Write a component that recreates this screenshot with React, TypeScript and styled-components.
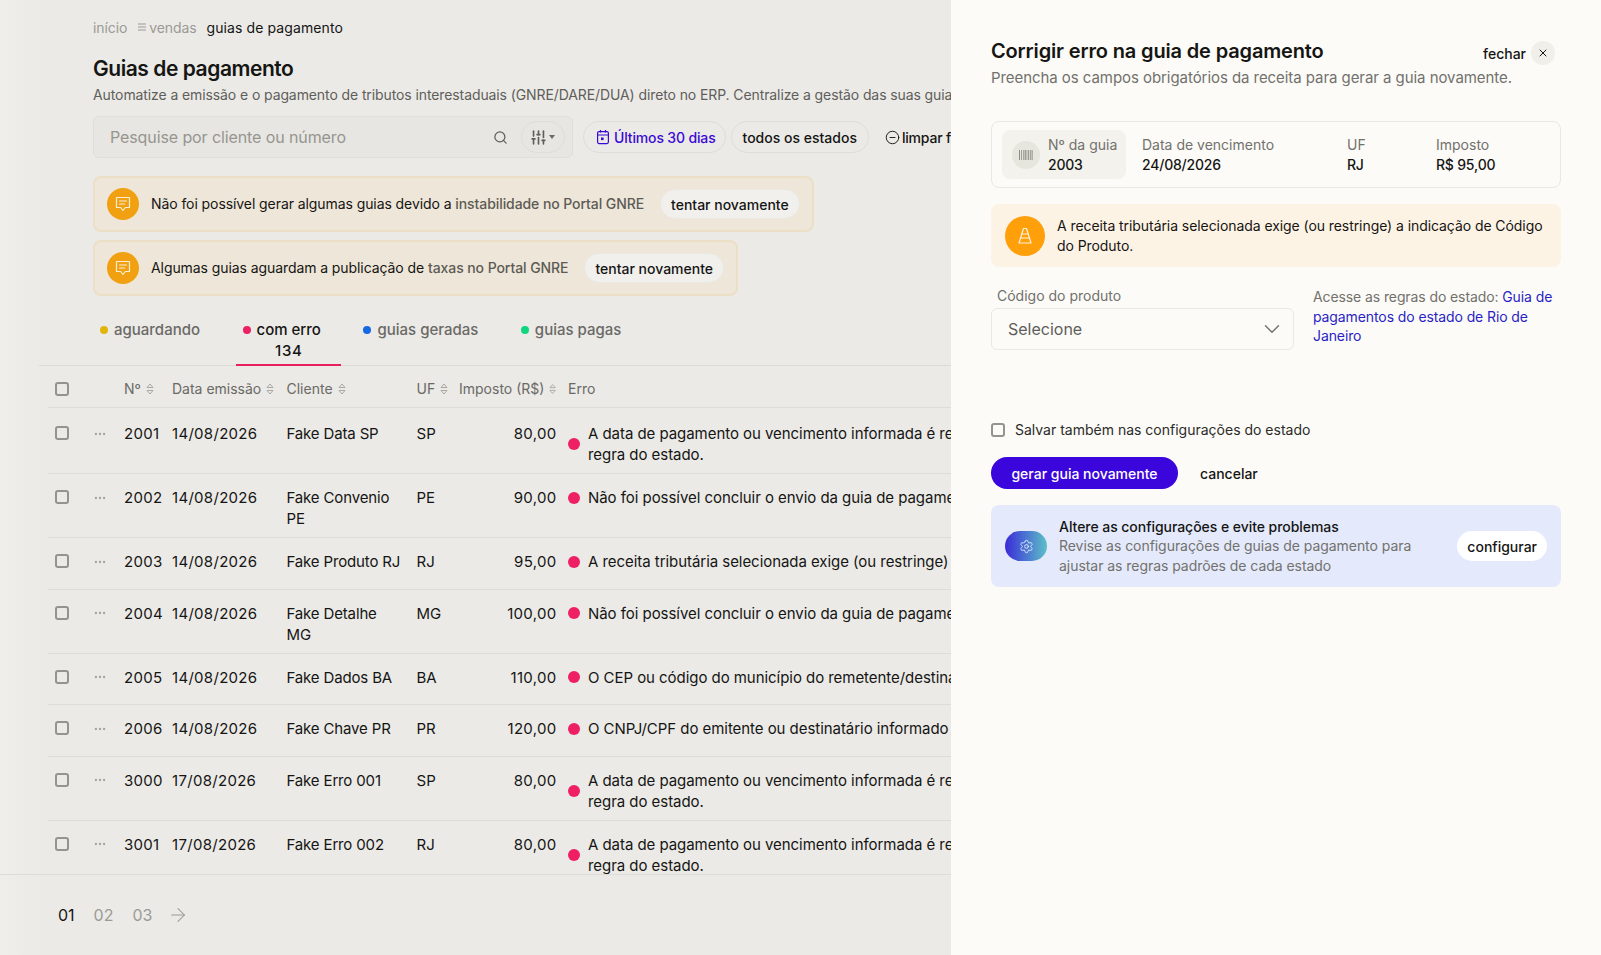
import React from 'react';
import styled, { createGlobalStyle } from 'styled-components';
import {
  ArrowRight,
  ChevronDown,
  CircleMinus,
  Ellipsis,
  Search,
  Settings,
  SlidersVertical,
  X,
} from 'lucide-react';

const GlobalStyle = createGlobalStyle`
  html, body {
    margin: 0;
    height: 100%;
    overflow: hidden;
  }
  body {
    font-family: Inter, "Liberation Sans", sans-serif;
    font-size: 14px;
    color: #151513;
    background: #ebeae7;
  }
  #root {
    height: 100%;
  }
  * {
    box-sizing: border-box;
  }
`;

const gridColumns = '38px 31px 48px 114.5px 130px 42.5px 97.5px 1fr';

const Shell = styled.div`
  display: flex;
  height: 955px;
  width: 1601px;
  overflow: hidden;
`;

const Main = styled.main`
  width: 951px;
  flex: none;
  display: flex;
  flex-direction: column;
  overflow: hidden;
  background: linear-gradient(90deg, #efeeeb 0, #ebeae7 40px);
`;

const Top = styled.section`
  padding: 17px 0 0 93px;
`;

const Crumbs = styled.nav`
  display: flex;
  align-items: center;
  height: 20px;
  white-space: nowrap;
`;

const Crumb = styled.span<{ $current?: boolean }>`
  color: ${({ $current }) => ($current ? '#151513' : '#9b9a95')};
  margin-right: ${({ $current }) => ($current ? '0' : '10px')};
  letter-spacing: ${({ $current }) => ($current ? '0.1px' : '-0.1px')};
  display: inline-flex;
  align-items: center;
  gap: 2px;
`;

const Title = styled.h1`
  margin: 18px 0 0;
  font-size: 21px;
  line-height: 28px;
  font-weight: 600;
  letter-spacing: -0.45px;
`;

const Description = styled.p`
  margin: 2px 0 0;
  line-height: 20px;
  color: #5f5e5a;
  white-space: nowrap;
  letter-spacing: -0.1px;
`;

const Toolbar = styled.div`
  display: flex;
  align-items: center;
  margin-top: 11px;
  white-space: nowrap;
`;

const SearchBox = styled.div`
  width: 480px;
  height: 42px;
  flex: none;
  display: flex;
  align-items: center;
  padding: 0 7px 0 16px;
  background: #e7e6e2;
  border: 1px solid #e0dfdb;
  border-radius: 6px;
  color: #96958f;
  font-size: 16px;
  letter-spacing: -0.1px;
`;

const Placeholder = styled.span`
  flex: 1;
`;

const SearchIcon = styled(Search)`
  color: #5f5e5a;
  margin-right: 13px;
`;

const FilterButton = styled.button`
  width: 44px;
  height: 32px;
  display: flex;
  align-items: center;
  justify-content: center;
  gap: 2px;
  padding: 0 2px 0 0;
  background: transparent;
  border: 1px solid #deddd8;
  border-radius: 16px;
  color: #5f5e5a;
`;

const Caret = styled.i`
  width: 0;
  height: 0;
  border-left: 3.5px solid transparent;
  border-right: 3.5px solid transparent;
  border-top: 4px solid #6b6a66;
`;

const Chip = styled.button<{ $accent?: boolean }>`
  height: 32px;
  flex: none;
  margin-left: ${({ $accent }) => ($accent ? '10px' : '5px')};
  padding: 0 ${({ $accent }) => ($accent ? '9px 0 12px' : '11px')};
  display: inline-flex;
  align-items: center;
  gap: 4px;
  background: transparent;
  border: 1px solid #deddd8;
  border-radius: 16px;
  font: inherit;
  font-weight: 500;
  letter-spacing: ${({ $accent }) => ($accent ? '-0.15px' : '0')};
  color: ${({ $accent }) => ($accent ? '#3a09d6' : '#151513')};
`;

const ClearFilters = styled.span`
  margin-left: 16px;
  flex: none;
  display: inline-flex;
  align-items: center;
  gap: 2px;
  font-weight: 500;
  letter-spacing: -0.2px;
`;

const Alerts = styled.div`
  margin-top: 18px;
  display: flex;
  flex-direction: column;
  align-items: flex-start;
  gap: 8px;
`;

const Alert = styled.div`
  height: 56px;
  display: flex;
  align-items: center;
  padding: 0 12px;
  background: #eee6d8;
  border: 2px solid #ebdfc6;
  border-radius: 8px;
  white-space: nowrap;
`;

const AlertIcon = styled.span`
  width: 32px;
  height: 32px;
  flex: none;
  display: flex;
  align-items: center;
  justify-content: center;
  border-radius: 50%;
  background: #f0a010;
  color: #fbeed2;
  margin-right: 12px;
`;

const AlertText = styled.span`
  letter-spacing: -0.08px;
  margin-top: -2px;
`;

const AlertMuted = styled.span`
  color: #5c5b55;
  font-weight: 500;
`;

const AlertButton = styled.button`
  height: 30px;
  margin-left: 16px;
  padding: 0 10px;
  border: 1px solid #e9e8e3;
  border-radius: 15px;
  background: #f1f0ed;
  font: inherit;
  font-weight: 500;
  color: #151513;
`;

const Tabs = styled.div`
  margin: 24px 0 0 38.5px;
  padding-left: 55px;
  display: flex;
  gap: 15.5px;
  height: 46px;
  border-bottom: 1px solid #dbdad6;
  white-space: nowrap;
`;

const Tab = styled.div<{ $active?: boolean }>`
  height: 46px;
  text-align: center;
  border-bottom: 2px solid ${({ $active }) => ($active ? '#e8205f' : 'transparent')};
  color: ${({ $active }) => ($active ? '#151513' : '#6a6965')};
  font-size: 15px;
  font-weight: 500;
  line-height: 20px;
`;

const TabLabel = styled.div`
  display: flex;
  align-items: center;
  gap: 6px;
  padding: 0 20.5px 0 6.5px;
`;

const Dot = styled.i<{ $color: string; $size?: number }>`
  flex: none;
  width: ${({ $size }) => $size ?? 8}px;
  height: ${({ $size }) => $size ?? 8}px;
  border-radius: 50%;
  background: ${({ $color }) => $color};
`;

const Count = styled.div`
  margin-top: 1px;
  color: #151513;
  letter-spacing: 0.6px;
`;

const TableArea = styled.div`
  flex: 1;
  min-height: 0;
  overflow: hidden;
  margin-left: 48px;
`;

const Row = styled.div<{ $first?: boolean }>`
  display: grid;
  grid-template-columns: ${gridColumns};
  min-height: 51.5px;
  padding: ${({ $first }) => ($first ? '15px' : '13px')} 0 8px 7px;
  border-bottom: 1px solid #dddcd8;
  font-size: 15px;
  line-height: 21px;
  white-space: nowrap;
`;

const HeadRow = styled.div`
  display: grid;
  grid-template-columns: ${gridColumns};
  height: 42px;
  padding: 4px 0 0 7px;
  align-items: center;
  border-bottom: 1px solid #dddcd8;
  color: #6a6965;
  white-space: nowrap;
`;

const HeadCell = styled.div`
  display: flex;
  align-items: center;
  gap: 5px;
`;

const ErrorHead = styled(HeadCell)`
  padding-left: 11.5px;
`;

const Box = styled.span`
  display: block;
  width: 14px;
  height: 14px;
  flex: none;
  border: 2px solid #94938e;
  border-radius: 3px;
  background: transparent;
`;

const RowBox = styled(Box)`
  margin-top: 3px;
`;

const RowMenu = styled.span`
  display: flex;
  height: 21px;
  align-items: center;
  color: #a3a29d;
`;

const Cell = styled.div`
  letter-spacing: 0.02px;
`;

const NumberCell = styled(Cell)`
  letter-spacing: 0.3px;
`;

const ClientCell = styled(Cell)`
  white-space: normal;
  padding-right: 12px;
  letter-spacing: -0.15px;
`;

const TaxCell = styled(NumberCell)`
  text-align: right;
`;

const ErrorCell = styled.div`
  display: flex;
  align-items: center;
  align-self: start;
  gap: 8px;
  padding-left: 11.5px;
  letter-spacing: -0.05px;
`;

const Footer = styled.footer`
  flex: none;
  height: 81px;
  border-top: 1px solid #dddcd8;
  display: flex;
  align-items: center;
  padding-left: 58px;
  gap: 19px;
  font-size: 16px;
`;

const PageLink = styled.span<{ $current?: boolean }>`
  color: ${({ $current }) => ($current ? '#151513' : '#9b9a95')};
`;

const PageArrow = styled(ArrowRight)`
  color: #9b9a95;
  margin-left: -4px;
`;

const Panel = styled.aside`
  width: 650px;
  flex: none;
  padding: 37px 40px 0;
  background: #fcfbf8;
`;

const PanelHead = styled.header`
  display: flex;
  justify-content: space-between;
  align-items: flex-start;
  white-space: nowrap;
`;

const PanelTitle = styled.h2`
  margin: 0;
  font-size: 20px;
  line-height: 28px;
  font-weight: 600;
  letter-spacing: -0.15px;
`;

const PanelSubtitle = styled.p`
  margin: 3px 0 0;
  font-size: 15px;
  line-height: 20px;
  color: #72716c;
  letter-spacing: -0.06px;
`;

const CloseGroup = styled.div`
  margin: 4px 6px 0 0;
  display: flex;
  align-items: center;
  gap: 5px;
  font-weight: 500;
`;

const CloseButton = styled.button`
  width: 24px;
  height: 24px;
  padding: 0;
  display: flex;
  align-items: center;
  justify-content: center;
  border: none;
  border-radius: 50%;
  background: #f0efea;
  color: #151513;
`;

const GuideCard = styled.section`
  margin-top: 33px;
  padding: 8px 10px;
  display: flex;
  align-items: center;
  border: 1px solid #e9e8e3;
  border-radius: 8px;
  white-space: nowrap;
`;

const GuideNumber = styled.div`
  height: 49px;
  width: 124px;
  flex: none;
  display: flex;
  align-items: center;
  gap: 8px;
  padding-left: 10px;
  background: #f3f2ed;
  border-radius: 8px;
  margin-right: 16px;
`;

const BarcodeBadge = styled.span`
  width: 28px;
  height: 28px;
  display: flex;
  align-items: center;
  justify-content: center;
  border-radius: 50%;
  background: #e6e5de;
  color: #8d8c86;
`;

const Field = styled.div<{ $width?: number }>`
  width: ${({ $width }) => ($width ? `${$width}px` : 'auto')};
  flex: none;
  line-height: 20px;
`;

const FieldLabel = styled.div`
  color: #72716c;
`;

const FieldValue = styled.div`
  font-weight: 500;
  letter-spacing: -0.2px;
`;

const Warning = styled.section`
  margin-top: 16px;
  height: 63px;
  display: flex;
  align-items: center;
  gap: 12px;
  padding: 0 10px 0 14px;
  background: #fdf3e5;
  border-radius: 8px;
  line-height: 20px;
  letter-spacing: -0.07px;
`;

const WarningIcon = styled.span`
  width: 40px;
  height: 40px;
  flex: none;
  display: flex;
  align-items: center;
  justify-content: center;
  border-radius: 50%;
  background: #ff9f0a;
  color: #fff3dc;
`;

const FormRow = styled.div`
  margin-top: 19px;
  display: flex;
  gap: 19px;
`;

const SelectColumn = styled.div`
  width: 303px;
  flex: none;
`;

const SelectLabel = styled.label`
  display: block;
  padding-left: 6px;
  line-height: 20px;
  color: #72716c;
`;

const SelectBox = styled.div`
  margin-top: 2px;
  height: 42px;
  display: flex;
  align-items: center;
  justify-content: space-between;
  padding: 0 8px 0 16px;
  border: 1px solid #e9e8e3;
  border-radius: 6px;
  font-size: 16px;
  color: #5f5e5a;
`;

const RulesText = styled.p`
  margin: 1px 0 0;
  line-height: 19.5px;
  color: #72716c;
  letter-spacing: -0.1px;
`;

const RulesLink = styled.a`
  color: #2a1fc4;
  text-decoration: none;
`;

const SaveRow = styled.label`
  margin-top: 70px;
  display: flex;
  align-items: center;
  gap: 10px;
  line-height: 20px;
  color: #2b2b28;
`;

const Actions = styled.div`
  margin-top: 17px;
  display: flex;
  align-items: center;
  gap: 22px;
`;

const PrimaryButton = styled.button`
  width: 187px;
  height: 32px;
  padding: 0;
  border: none;
  border-radius: 16px;
  background: #3b06dc;
  color: #fff;
  font: inherit;
  font-weight: 500;
`;

const GhostButton = styled.button`
  padding: 0;
  border: none;
  background: none;
  font: inherit;
  font-weight: 500;
  color: #151513;
`;

const Promo = styled.section`
  margin-top: 16px;
  height: 82px;
  display: flex;
  align-items: center;
  padding: 0 14px;
  gap: 12px;
  background: #e4eafc;
  border-radius: 8px;
`;

const PromoIcon = styled.span`
  width: 42px;
  height: 30px;
  flex: none;
  display: flex;
  align-items: center;
  justify-content: center;
  border-radius: 15px;
  background: linear-gradient(90deg, #3a2bd9, #5cc0c8);
  color: #e8f0ff;
`;

const PromoText = styled.div`
  flex: 1;
  line-height: 19.5px;
  color: #72716c;
  letter-spacing: -0.05px;
`;

const PromoTitle = styled.div`
  color: #151513;
  font-weight: 500;
`;

const PromoButton = styled.button`
  height: 30px;
  padding: 0 10px;
  border: none;
  border-radius: 15px;
  background: #fff;
  font: inherit;
  font-weight: 500;
  color: #151513;
`;

const SortIcon = () => (
  <svg width="8" height="12" viewBox="0 0 8 12" fill="none" stroke="#a9a8a3" strokeWidth="1">
    <path d="M4 1 7 4.5H1Z" />
    <path d="M4 11 1 7.5H7Z" />
  </svg>
);

const MenuGlyph = () => (
  <svg width="10" height="8" viewBox="0 0 10 8" stroke="#9b9a95" strokeWidth="1">
    <path d="M1 1h8M1 4h8M1 7h8" />
  </svg>
);

const BubbleIcon = () => (
  <svg width="18" height="18" viewBox="0 0 18 18" fill="none" stroke="currentColor" strokeWidth="1.2">
    <path d="M2.5 2.5h13v10h-4.2L9 15.5 6.7 12.5H2.5Z" strokeLinejoin="round" />
    <path d="M5.5 6h7M5.5 9h5" strokeLinecap="round" />
  </svg>
);

const BarcodeIcon = () => (
  <svg width="14" height="10" viewBox="0 0 14 10" fill="currentColor">
    <path d="M0 0h1v10H0zM2 0h.8v10H2zM4 0h.7v10H4zM5.6 0h1.2v10H5.6zM7.6 0h.7v10h-.7zM9.2 0h1v10h-1zM11 0h.7v10H11zM12.6 0h1v10h-1z" />
  </svg>
);

const CalendarIcon = () => (
  <svg width="14" height="16" viewBox="0 0 14 16" fill="none" stroke="currentColor" strokeWidth="1.2">
    <rect x="1.6" y="2.6" width="10.8" height="12" rx="1.5" />
    <path d="M1.6 6h10.8M4.5 1v2.5M9.5 1v2.5" />
    <rect x="5" y="8.5" width="2.6" height="2.6" fill="currentColor" stroke="none" />
  </svg>
);

const ConeIcon = () => (
  <svg width="16" height="18" viewBox="0 0 16 18" fill="none" stroke="currentColor" strokeWidth="1.2">
    <path d="M6.5 1.5h3L14 16H2Z" strokeLinejoin="round" />
    <path d="M4.8 7h6.4M3.6 11h8.8" />
  </svg>
);

type GuideRow = {
  id: string;
  date: string;
  client: string;
  uf: string;
  tax: string;
  error: string[];
};

const dateError = 'A data de pagamento ou vencimento informada é rejeitada pela';

const rows: GuideRow[] = [
  { id: '2001', date: '14/08/2026', client: 'Fake Data SP', uf: 'SP', tax: '80,00', error: [dateError, 'regra do estado.'] },
  { id: '2002', date: '14/08/2026', client: 'Fake Convenio PE', uf: 'PE', tax: '90,00', error: ['Não foi possível concluir o envio da guia de pagamento'] },
  { id: '2003', date: '14/08/2026', client: 'Fake Produto RJ', uf: 'RJ', tax: '95,00', error: ['A receita tributária selecionada exige (ou restringe) a indicação'] },
  { id: '2004', date: '14/08/2026', client: 'Fake Detalhe MG', uf: 'MG', tax: '100,00', error: ['Não foi possível concluir o envio da guia de pagamento'] },
  { id: '2005', date: '14/08/2026', client: 'Fake Dados BA', uf: 'BA', tax: '110,00', error: ['O CEP ou código do município do remetente/destinatário'] },
  { id: '2006', date: '14/08/2026', client: 'Fake Chave PR', uf: 'PR', tax: '120,00', error: ['O CNPJ/CPF do emitente ou destinatário informado não é válido'] },
  { id: '3000', date: '17/08/2026', client: 'Fake Erro 001', uf: 'SP', tax: '80,00', error: [dateError, 'regra do estado.'] },
  { id: '3001', date: '17/08/2026', client: 'Fake Erro 002', uf: 'RJ', tax: '80,00', error: [dateError, 'regra do estado.'] },
];

const tabs = [
  { label: 'aguardando', color: '#e0b50c' },
  { label: 'com erro', color: '#ee2063', count: '134', active: true },
  { label: 'guias geradas', color: '#1668e3' },
  { label: 'guias pagas', color: '#0fd67e' },
];

export default function App() {
  return (
    <Shell>
      <GlobalStyle />
      <Main>
        <Top>
          <Crumbs>
            <Crumb>início</Crumb>
            <Crumb>
              <MenuGlyph />
              vendas
            </Crumb>
            <Crumb $current>guias de pagamento</Crumb>
          </Crumbs>
          <Title>Guias de pagamento</Title>
          <Description>
            Automatize a emissão e o pagamento de tributos interestaduais (GNRE/DARE/DUA) direto no ERP. Centralize a gestão das suas guias
          </Description>
          <Toolbar>
            <SearchBox>
              <Placeholder>Pesquise por cliente ou número</Placeholder>
              <SearchIcon size={15} />
              <FilterButton>
                <SlidersVertical size={17} strokeWidth={2.3} />
                <Caret />
              </FilterButton>
            </SearchBox>
            <Chip $accent>
              <CalendarIcon />
              Últimos 30 dias
            </Chip>
            <Chip>todos os estados</Chip>
            <ClearFilters>
              <CircleMinus size={15} strokeWidth={1.5} />
              limpar filtros
            </ClearFilters>
          </Toolbar>
          <Alerts>
            <Alert>
              <AlertIcon>
                <BubbleIcon />
              </AlertIcon>
              <AlertText>
                Não foi possível gerar algumas guias devido a <AlertMuted>instabilidade no Portal GNRE</AlertMuted>
              </AlertText>
              <AlertButton>tentar novamente</AlertButton>
            </Alert>
            <Alert>
              <AlertIcon>
                <BubbleIcon />
              </AlertIcon>
              <AlertText>
                Algumas guias aguardam a publicação de <AlertMuted>taxas no Portal GNRE</AlertMuted>
              </AlertText>
              <AlertButton>tentar novamente</AlertButton>
            </Alert>
          </Alerts>
        </Top>
        <Tabs>
          {tabs.map((tab) => (
            <Tab key={tab.label} $active={tab.active}>
              <TabLabel>
                <Dot $color={tab.color} />
                {tab.label}
              </TabLabel>
              {tab.count && <Count>{tab.count}</Count>}
            </Tab>
          ))}
        </Tabs>
        <TableArea>
          <HeadRow>
            <Box />
            <span />
            <HeadCell>
              Nº <SortIcon />
            </HeadCell>
            <HeadCell>
              Data emissão <SortIcon />
            </HeadCell>
            <HeadCell>
              Cliente <SortIcon />
            </HeadCell>
            <HeadCell>
              UF <SortIcon />
            </HeadCell>
            <HeadCell>
              Imposto (R$) <SortIcon />
            </HeadCell>
            <ErrorHead>Erro</ErrorHead>
          </HeadRow>
          {rows.map((row, index) => (
            <Row key={row.id} $first={index === 0}>
              <RowBox />
              <RowMenu>
                <Ellipsis size={14} strokeWidth={2} />
              </RowMenu>
              <NumberCell>{row.id}</NumberCell>
              <NumberCell>{row.date}</NumberCell>
              <ClientCell>{row.client}</ClientCell>
              <Cell>{row.uf}</Cell>
              <TaxCell>{row.tax}</TaxCell>
              <ErrorCell>
                <Dot $color="#ee2063" $size={12} />
                <div>
                  {row.error.map((line) => (
                    <div key={line}>{line}</div>
                  ))}
                </div>
              </ErrorCell>
            </Row>
          ))}
        </TableArea>
        <Footer>
          <PageLink $current>01</PageLink>
          <PageLink>02</PageLink>
          <PageLink>03</PageLink>
          <PageArrow size={22} strokeWidth={1.1} />
        </Footer>
      </Main>
      <Panel>
        <PanelHead>
          <PanelTitle>Corrigir erro na guia de pagamento</PanelTitle>
          <CloseGroup>
            fechar
            <CloseButton>
              <X size={12} />
            </CloseButton>
          </CloseGroup>
        </PanelHead>
        <PanelSubtitle>Preencha os campos obrigatórios da receita para gerar a guia novamente.</PanelSubtitle>
        <GuideCard>
          <GuideNumber>
            <BarcodeBadge>
              <BarcodeIcon />
            </BarcodeBadge>
            <Field>
              <FieldLabel>Nº da guia</FieldLabel>
              <FieldValue>2003</FieldValue>
            </Field>
          </GuideNumber>
          <Field $width={205}>
            <FieldLabel>Data de vencimento</FieldLabel>
            <FieldValue>24/08/2026</FieldValue>
          </Field>
          <Field $width={89}>
            <FieldLabel>UF</FieldLabel>
            <FieldValue>RJ</FieldValue>
          </Field>
          <Field>
            <FieldLabel>Imposto</FieldLabel>
            <FieldValue>R$ 95,00</FieldValue>
          </Field>
        </GuideCard>
        <Warning>
          <WarningIcon>
            <ConeIcon />
          </WarningIcon>
          <span>A receita tributária selecionada exige (ou restringe) a indicação de Código do Produto.</span>
        </Warning>
        <FormRow>
          <SelectColumn>
            <SelectLabel>Código do produto</SelectLabel>
            <SelectBox>
              Selecione
              <ChevronDown size={26} strokeWidth={1.3} color="#72716c" />
            </SelectBox>
          </SelectColumn>
          <RulesText>
            Acesse as regras do estado: <RulesLink>Guia de pagamentos do estado de Rio de Janeiro</RulesLink>
          </RulesText>
        </FormRow>
        <SaveRow>
          <Box />
          Salvar também nas configurações do estado
        </SaveRow>
        <Actions>
          <PrimaryButton>gerar guia novamente</PrimaryButton>
          <GhostButton>cancelar</GhostButton>
        </Actions>
        <Promo>
          <PromoIcon>
            <Settings size={15} strokeWidth={1.4} />
          </PromoIcon>
          <PromoText>
            <PromoTitle>Altere as configurações e evite problemas</PromoTitle>
            Revise as configurações de guias de pagamento para ajustar as regras padrões de cada estado
          </PromoText>
          <PromoButton>configurar</PromoButton>
        </Promo>
      </Panel>
    </Shell>
  );
}
